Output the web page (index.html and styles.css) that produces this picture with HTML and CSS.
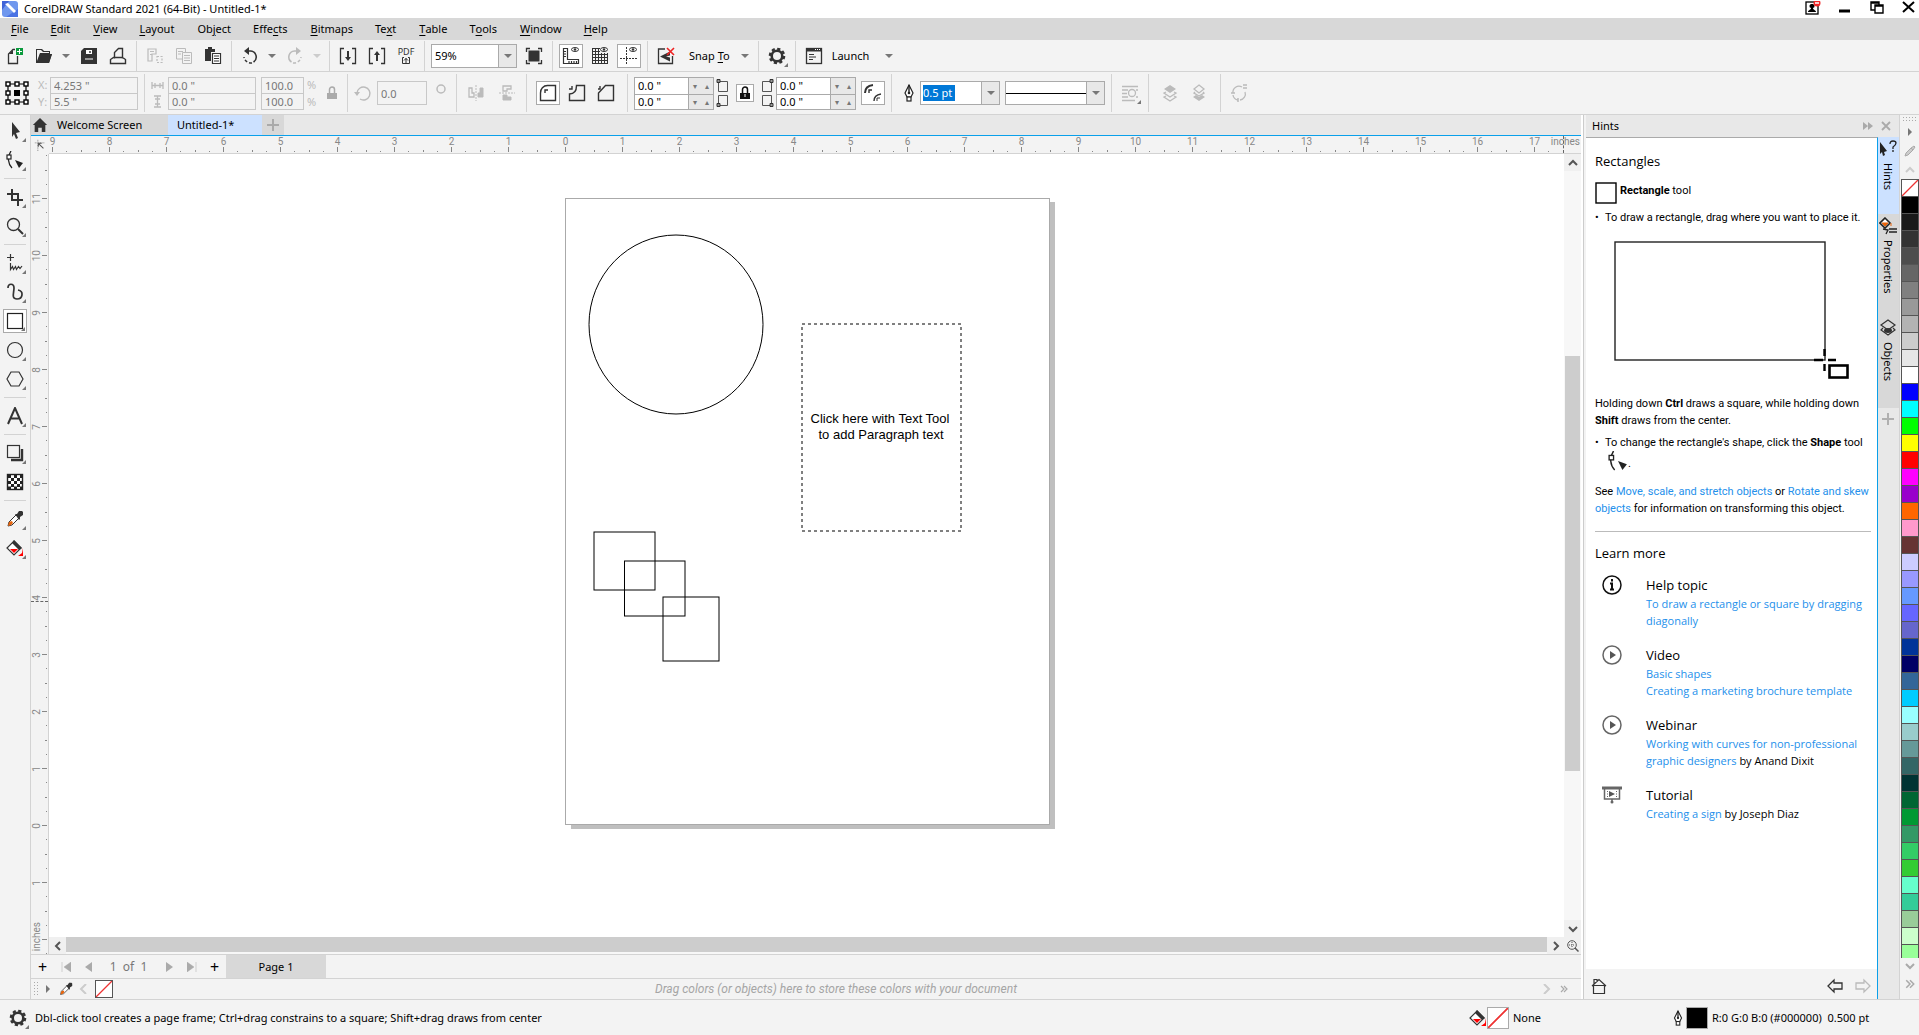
FILE: index.html
```html
<!DOCTYPE html>
<html lang="en">

<head>
    <meta charset="UTF-8">
    <meta name="viewport" content="width=device-width, initial-scale=1.0">
    <title>CorelDRAW Standard 2021 (64-Bit) - Untitled-1*</title>
    <link rel="stylesheet" href="styles.css">
</head>

<body>
    <!-- shared icons -->
    <svg class="sprite" aria-hidden="true">
        <symbol id="dropper" viewBox="0 0 18 18">
            <path d="M2 16l1-4 7-7 3 3-7 7z" fill="#fff" stroke="#333" />
            <path d="M2 16l1-4 3-1 1 2-2 2z" fill="#e8640c" />
            <path d="M9 4l2 0 2-3h3l1 1v3l-3 2v2l-1 1z" fill="#333" />
        </symbol>
        <symbol id="bucket" viewBox="0 0 18 18">
            <path d="M8 2l7 7-7 7-7-7z" fill="#fff" stroke="#333" stroke-width="1.2" />
            <path d="M8 1l8 8-3 2-7-7z" fill="#333" />
            <path d="M4 10h8l-4 4z" fill="#f00" />
            <path d="M17 9v8h-5l4-3z" fill="#f00" />
        </symbol>
        <symbol id="pen" viewBox="0 0 18 18">
            <path d="M9 1l4 8-2 4H7L5 9z" fill="#fff" stroke="#222" stroke-width="1.2" />
            <path d="M9 1v8" stroke="#222" stroke-width="1.4" />
            <circle cx="9" cy="9" r="1.3" fill="#222" />
            <rect x="7" y="13" width="4" height="4" fill="#fff" stroke="#222" stroke-width="1.2" />
        </symbol>
        <symbol id="gear" viewBox="0 0 18 18">
            <circle cx="9" cy="9" r="7.2" fill="none" stroke="#333" stroke-width="2.2" stroke-dasharray="3.2 2.45" />
            <circle cx="9" cy="9" r="5.3" fill="none" stroke="#333" stroke-width="2.6" />
        </symbol>
        <symbol id="undo" viewBox="0 0 18 18">
            <path d="M6 4h3.500a6 6 0 0 1 3 11" fill="none" stroke="currentColor" stroke-width="1.6" />
            <path d="M11 16a7 7 0 0 1-8-6" fill="none" stroke="currentColor" stroke-width="1.5" stroke-dasharray="3 2" />
            <path d="M3 4l5-4v8z" fill="currentColor" />
        </symbol>
        <symbol id="eye" viewBox="0 0 8 5">
            <ellipse cx="4" cy="2.500" rx="3.500" ry="2" fill="#fff" stroke="#333" />
            <circle cx="4" cy="2.500" r="1.200" fill="#333" />
        </symbol>
        <symbol id="shape" viewBox="0 0 18 18">
            <path d="M5 0C1 6 2 13 6 17" fill="none" stroke="#222" stroke-width="1.3" />
            <rect x="1" y="4" width="4" height="4" fill="#fff" stroke="#222" stroke-width="1.2" />
            <path d="M9 9l8 3-4 5z" fill="#222" />
        </symbol>
        <symbol id="play" viewBox="0 0 20 20">
            <circle cx="10" cy="10" r="9" fill="none" stroke="#666" stroke-width="1.5" />
            <path d="M8 6v8l6-4z" fill="#555" />
        </symbol>
        <symbol id="chevrons" viewBox="0 0 8 8">
            <path d="M1 1l3 3-3 3M4 1l3 3-3 3" fill="none" stroke="currentColor" stroke-width="1.2" />
        </symbol>
    </svg>

    <header class="title-bar">
        <svg class="logo" viewBox="0 0 16 16">
            <rect width="16" height="16" rx="3" fill="#6f97ee" />
            <path d="M0 0h7L0 9z" fill="#3f63d8" />
            <path d="M16 16H4l12-8z" fill="#4a73e4" />
            <path d="M3 3l9 9 2-2-8-8z" fill="#fff" />
        </svg>
        <h1>CorelDRAW Standard 2021 (64-Bit) - Untitled-1*</h1>
        <div class="window-buttons">
            <button aria-label="Account"><svg viewBox="0 0 16 16">
                    <rect x="1" y="1" width="12" height="12" fill="none" stroke="#000" stroke-width="1.300" />
                    <path d="M7 3a2 2 0 0 1 1 4c0 2 3 2 3 4H3c0-2 3-2 3-4a2 2 0 0 1 1-4z" />
                    <circle cx="12" cy="2" r="3.500" fill="#f02828" />
                    <path d="M10 2h4" stroke="#fff" stroke-width="1.500" />
                </svg></button>
            <button aria-label="Minimize"><svg viewBox="0 0 16 16">
                    <path d="M2 10h11" stroke="#000" stroke-width="3" />
                </svg></button>
            <button aria-label="Restore"><svg viewBox="0 0 16 16">
                    <path d="M6 9H2V1h8v3M2 2h8M6 4h8v8H6zM6 5h8" fill="none" stroke="#000" stroke-width="1.400" />
                </svg></button>
            <button aria-label="Close"><svg viewBox="0 0 16 16">
                    <path d="M2 1l11 10M13 1L2 11" stroke="#000" stroke-width="2" />
                </svg></button>
        </div>
    </header>

    <nav class="menu-bar">
        <button><u>F</u>ile</button>
        <button><u>E</u>dit</button>
        <button><u>V</u>iew</button>
        <button><u>L</u>ayout</button>
        <button>Ob<u>j</u>ect</button>
        <button>Effe<u>c</u>ts</button>
        <button><u>B</u>itmaps</button>
        <button>Te<u>x</u>t</button>
        <button><u>T</u>able</button>
        <button>T<u>o</u>ols</button>
        <button><u>W</u>indow</button>
        <button><u>H</u>elp</button>
    </nav>

    <div class="toolbar standard">
        <button class="tool" aria-label="New"><svg viewBox="0 0 18 18">
                <path d="M9 2.500H7L2.500 7v9.500h9V9" fill="none" stroke="#333" stroke-width="1.300" />
                <path d="M7 3v4H3z" fill="#333" />
                <rect x="10" y="1" width="7" height="7" fill="#0a9a3c" />
                <path d="M13.500 2v5M11 4.500h5" stroke="#fff" />
            </svg></button>
        <button class="tool" aria-label="Open"><svg viewBox="0 0 18 18">
                <path d="M1 16V2h6l2 2h6v3h2l-3 9z" fill="#333" />
                <path d="M2 14l3-8h9V5H8L6 3H2z" fill="#f3f3f3" />
                <path d="M5 7h12l-3 9H2z" fill="#333" />
            </svg></button>
        <button class="drop" aria-label="Open recent"></button>
        <button class="tool" aria-label="Save"><svg viewBox="0 0 18 18">
                <path d="M4 1h13v16H1V4z" fill="#333" />
                <rect x="6" y="3" width="6" height="4" fill="#fff" />
                <path d="M5 12h8" stroke="#fff" />
                <path d="M10 4v2" stroke="#333" stroke-width="1.500" />
            </svg></button>
        <button class="tool" aria-label="Print"><svg viewBox="0 0 18 18">
                <path d="M5.500 11.500v-6l4-4h4v10M1.500 16.500v-4l3-2h9l3 2v4z" fill="none" stroke="#333" stroke-width="1.400" />
            </svg></button>
        <span class="sep"></span>
        <button class="tool off" aria-label="Cut" disabled><svg viewBox="0 0 18 18">
                <path d="M2 2h8v5H6v7H2zM4 4.500h4M4 7.500h2" fill="none" stroke="currentColor" stroke-width="1.200" />
                <path d="M11 9.500h5v6h-5z" fill="none" stroke="currentColor" stroke-width="1.200" stroke-dasharray="2 1.500" />
            </svg></button>
        <button class="tool off" aria-label="Copy" disabled><svg viewBox="0 0 18 18">
                <path d="M7 12H1.500V1.500h9V5M3 4.500h5M3 7h3" fill="none" stroke="currentColor" />
                <path d="M7.500 5.500h9v11h-9zM9 8.500h6M9 11h6M9 13.500h6" fill="none" stroke="currentColor" />
            </svg></button>
        <button class="tool" aria-label="Paste"><svg viewBox="0 0 18 18">
                <path d="M1 2h3V0h4v2h3v3H7v9H1z" fill="#333" />
                <path d="M8.500 6.500h8v10h-8zM10 9h5M10 11.500h5M10 14h5" fill="#fff" stroke="#333" stroke-width="1.200" />
            </svg></button>
        <span class="sep"></span>
        <button class="tool" aria-label="Undo"><svg>
                <use href="#undo" />
            </svg></button>
        <button class="drop" aria-label="Undo list"></button>
        <button class="tool off flip" aria-label="Redo" disabled><svg>
                <use href="#undo" />
            </svg></button>
        <button class="drop off" aria-label="Redo list" disabled></button>
        <span class="sep"></span>
        <button class="tool" aria-label="Import"><svg viewBox="0 0 18 18">
                <path d="M5 1.500H1.500v15H5M13 1.500h3.500v15H13" fill="none" stroke="#333" stroke-width="1.300" />
                <path d="M8 4h2v6h2l-3 4-3-4h2z" fill="#333" />
            </svg></button>
        <button class="tool" aria-label="Export"><svg viewBox="0 0 18 18">
                <path d="M5 1.500H1.500v15H5M13 1.500h3.500v15H13" fill="none" stroke="#333" stroke-width="1.300" />
                <path d="M8 14h2V8h2L9 4 6 8h2z" fill="#333" />
            </svg></button>
        <button class="tool pdf" aria-label="Publish to PDF"><span>PDF</span><svg viewBox="0 0 8 7">
                <path d="M2 .5H.5v6h7v-6H6" fill="none" stroke="#333" />
                <path d="M4 6V1M2 3.500l2-2 2 2" fill="none" stroke="#333" />
            </svg></button>
        <span class="sep"></span>
        <div class="combo zoom-level">
            <input type="text" value="59%" aria-label="Zoom level">
            <button class="drop" aria-label="Zoom list"></button>
        </div>
        <button class="tool" aria-label="Full-screen preview"><svg viewBox="0 0 18 18">
                <path d="M1.500 5V1.500H5M13 1.500h3.500V5M16.500 13v3.500H13M5 16.500H1.500V13" fill="none" stroke="#333" stroke-width="1.300" />
                <rect x="3.500" y="3.500" width="11" height="11" fill="#333" />
            </svg></button>
        <span class="sep"></span>
        <button class="tool on" aria-label="Show rulers"><svg viewBox="0 0 18 18">
                <path d="M1.500 1.500h4v11h11v4h-15zM2 4.500h2M2 7h2M2 9.500h2M7 14v2M9.500 14v2M12 14v2M14.500 14v2" fill="none" stroke="#333" stroke-width="1.200" />
                <use href="#eye" x="9" y="0" width="8" height="5" />
            </svg></button>
        <button class="tool" aria-label="Show grid"><svg viewBox="0 0 18 18">
                <path d="M1.500 1v16M4.500 1v16M7.500 1v16M10.500 6v11M13.500 6v11M16.500 6v11M1 1.500h8M1 4.500h8M1 7.500h16M1 10.500h16M1 13.500h16M1 16.500h16" stroke="#333" />
                <use href="#eye" x="9" y="0" width="8" height="5" />
            </svg></button>
        <button class="tool on" aria-label="Show guidelines"><svg viewBox="0 0 18 18">
                <path d="M6.500 0v18M0 11.500h18" stroke="#333" stroke-dasharray="2 1" />
                <use href="#eye" x="9" y="0" width="8" height="5" />
            </svg></button>
        <span class="sep"></span>
        <button class="tool" aria-label="Snap off"><svg viewBox="0 0 18 18">
                <path d="M8 2H1.500v14.500h14V9" fill="none" stroke="#333" stroke-width="1.300" />
                <path d="M3 9.500l10-5v4l-4 1 4 1v4z" fill="#333" />
                <path d="M10 1l7 7M17 1l-7 7" stroke="#e22" stroke-width="1.600" />
            </svg></button>
        <button class="snap"><span>Snap <u>T</u>o</span></button>
        <button class="drop" aria-label="Snap options"></button>
        <span class="sep"></span>
        <button class="tool more" aria-label="Options"><svg>
                <use href="#gear" />
            </svg></button>
        <span class="sep"></span>
        <button class="tool" aria-label="Application launcher"><svg viewBox="0 0 18 18">
                <rect x="1.500" y="1.500" width="15" height="15" fill="none" stroke="#333" stroke-width="1.300" />
                <path d="M1 3h16" stroke="#333" stroke-width="3" />
                <path d="M10 2.500h1M12 2.500h1M14 2.500h1" stroke="#fff" />
                <path d="M4 7.500h5M4 10h7M4 12.500h4" stroke="#333" />
            </svg></button>
        <button class="launch">Launch</button>
        <button class="drop" aria-label="Launch list"></button>
    </div>

    <div class="toolbar property">
        <button class="tool" aria-label="Object origin"><svg class="big" viewBox="0 0 24 24">
                <path d="M3 3h18v18H3z" fill="none" stroke="#000" stroke-width="1.200" />
                <g fill="#fff" stroke="#000" stroke-width="1.400">
                    <rect x="1" y="1" width="4" height="4" />
                    <rect x="10" y="1" width="4" height="4" />
                    <rect x="19" y="1" width="4" height="4" />
                    <rect x="1" y="10" width="4" height="4" />
                    <rect x="19" y="10" width="4" height="4" />
                    <rect x="1" y="19" width="4" height="4" />
                    <rect x="10" y="19" width="4" height="4" />
                    <rect x="19" y="19" width="4" height="4" />
                </g>
                <rect x="9" y="9" width="6" height="6" />
            </svg></button>
        <div class="fields position">
            <label for="pos-x">X:</label><input id="pos-x" type="text" value="4.253 &quot;" disabled>
            <label for="pos-y">Y:</label><input id="pos-y" type="text" value="5.5 &quot;" disabled>
        </div>
        <span class="sep"></span>
        <div class="fields size">
            <label for="size-w" aria-label="Width"><svg viewBox="0 0 13 13">
                    <path d="M1 3v7M12 3v7M4 4v5M9 4v5M1 6.500h11" stroke="#bbb" stroke-width="1.300" />
                </svg></label><input id="size-w" type="text" value="0.0 &quot;" disabled>
            <label for="size-h" aria-label="Height"><svg viewBox="0 0 13 13">
                    <path d="M3 1h7M3 12h7M4 4h5M4 9h5M6.500 1v11" stroke="#bbb" stroke-width="1.300" />
                </svg></label><input id="size-h" type="text" value="0.0 &quot;" disabled>
        </div>
        <div class="fields scale">
            <input id="scale-x" type="text" value="100.0" disabled><label for="scale-x">%</label>
            <input id="scale-y" type="text" value="100.0" disabled><label for="scale-y">%</label>
        </div>
        <button class="lock" aria-label="Lock ratio" disabled><svg viewBox="0 0 12 14">
                <path d="M3.500 7V3.500a2.500 2.500 0 0 1 5 0V7" fill="none" stroke="#aaa" stroke-width="1.500" />
                <rect x="1" y="7" width="10" height="6" fill="#aaa" />
            </svg></button>
        <span class="sep"></span>
        <div class="fields angle">
            <label for="angle" aria-label="Angle of rotation"><svg viewBox="0 0 18 18">
                    <path d="M3 9a6.500 6.500 0 1 1 3 6" fill="none" stroke="#bbb" stroke-width="1.400" />
                    <path d="M0 8h6l-3 4z" fill="#bbb" />
                </svg></label><input id="angle" type="text" value="0.0" disabled>
        </div>
        <svg class="degree" viewBox="0 0 18 24">
            <circle cx="9" cy="8" r="4" fill="none" stroke="#bbb" stroke-width="1.500" />
        </svg>
        <span class="sep"></span>
        <button class="tool wide off" aria-label="Mirror horizontally" disabled><svg viewBox="0 0 18 18">
                <path d="M2 4v9h5v-4H5V4z" fill="none" stroke="currentColor" stroke-width="1.300" />
                <path d="M9 1v16" stroke="currentColor" stroke-dasharray="2 1" />
                <path d="M16 4v9h-5v-4h2V4z" fill="currentColor" stroke="currentColor" />
            </svg></button>
        <button class="tool wide off" aria-label="Mirror vertically" disabled><svg viewBox="0 0 18 18">
                <path d="M13 2H5v5h4V5h4z" fill="none" stroke="currentColor" stroke-width="1.300" />
                <path d="M1 9h16" stroke="currentColor" stroke-dasharray="2 1" />
                <path d="M13 16H5v-5h4v2h4z" fill="currentColor" stroke="currentColor" />
            </svg></button>
        <span class="sep"></span>
        <div class="group">
            <button class="tool on" aria-label="Round corner"><svg viewBox="0 0 18 18">
                    <path d="M1.500 16.500V9a7 7 0 0 1 7-7.500h8v15z" fill="none" stroke="#333" stroke-width="1.400" />
                    <path d="M6 9V6h3" fill="none" stroke="#333" stroke-width="1.400" />
                </svg></button>
            <button class="tool" aria-label="Scalloped corner"><svg viewBox="0 0 18 18">
                    <path d="M1.500 16.500V10q7 0 7-8.500h8v15z" fill="none" stroke="#333" stroke-width="1.400" />
                    <path d="M1 5h3V2" fill="none" stroke="#333" stroke-width="1.400" />
                </svg></button>
            <button class="tool" aria-label="Chamfered corner"><svg viewBox="0 0 18 18">
                    <path d="M1.500 16.500V9l7-7.500h8v15z" fill="none" stroke="#333" stroke-width="1.400" />
                    <path d="M1 5h2V2" fill="none" stroke="#333" stroke-width="1.400" />
                </svg></button>
        </div>
        <span class="sep"></span>
        <div class="radius">
            <div class="spins">
                <div class="spin"><input type="text" value="0.0 &quot;" aria-label="Top left radius"><button aria-label="Less">&#9662;</button><button aria-label="More">&#9652;</button></div>
                <div class="spin"><input type="text" value="0.0 &quot;" aria-label="Bottom left radius"><button aria-label="Less">&#9662;</button><button aria-label="More">&#9652;</button></div>
            </div>
            <svg class="corner-marks" viewBox="0 0 16 30">
                <path d="M4.500 3.500h9v10h-9zM4.500 17.500h9v10h-9z" fill="none" stroke="#555" />
                <path d="M3 1.500h3v3H3zM3 25.500h3v3H3z" fill="#999" stroke="#333" />
            </svg>
            <button class="lock on" aria-label="Edit corners together"><svg viewBox="0 0 12 14">
                    <path d="M3.500 7V3.500a2.500 2.500 0 0 1 5 0V7" fill="none" stroke="#111" stroke-width="1.500" />
                    <rect x="1" y="7" width="10" height="6" fill="#111" />
                    <path d="M6 8v3" stroke="#fff" />
                </svg></button>
            <svg class="corner-marks" viewBox="0 0 16 30">
                <path d="M2.500 3.500h9v10h-9zM2.500 17.500h9v10h-9z" fill="none" stroke="#555" />
                <path d="M10 1.500h3v3h-3zM10 25.500h3v3h-3z" fill="#999" stroke="#333" />
            </svg>
            <div class="spins">
                <div class="spin"><input type="text" value="0.0 &quot;" aria-label="Top right radius"><button aria-label="Less">&#9662;</button><button aria-label="More">&#9652;</button></div>
                <div class="spin"><input type="text" value="0.0 &quot;" aria-label="Bottom right radius"><button aria-label="Less">&#9662;</button><button aria-label="More">&#9652;</button></div>
            </div>
        </div>
        <button class="tool on" aria-label="Relative corner scaling"><svg viewBox="0 0 18 18">
                <path d="M1 9q0-7 8-8" fill="none" stroke="#333" stroke-width="2" />
                <path d="M5 9V6h3M10 17q0-6 7-7" fill="none" stroke="#333" stroke-width="1.400" />
                <path d="M13 17v-3h3" fill="none" stroke="#333" />
            </svg></button>
        <span class="sep"></span>
        <div class="outline">
            <label for="outline-width" aria-label="Outline width"><svg>
                    <use href="#pen" />
                </svg></label>
            <div class="combo">
                <span class="picked"><input id="outline-width" type="text" value="0.5 pt"></span>
                <button class="drop" aria-label="Width list"></button>
            </div>
        </div>
        <div class="combo line-style">
            <span class="line-sample"></span>
            <button class="drop" aria-label="Line style"></button>
        </div>
        <span class="sep"></span>
        <button class="tool more off" aria-label="Wrap text" disabled><svg viewBox="0 0 18 18">
                <path d="M1 2.500h16M1 6h6M1 9.500h5M1 13h6M1 16.500h13M15 6h2M15 13h2" stroke="currentColor" stroke-width="1.300" />
                <circle cx="11" cy="9" r="3.500" fill="none" stroke="currentColor" stroke-width="1.300" />
            </svg></button>
        <span class="sep"></span>
        <div class="group">
            <button class="tool off" aria-label="To front of page" disabled><svg viewBox="0 0 18 18">
                    <path d="M9 1l6 4-6 4-6-4z" fill="currentColor" />
                    <path d="M5 8l-2 1 6 4 6-4-2-1M5 12l-2 1 6 4 6-4-2-1" fill="none" stroke="currentColor" stroke-width="1.300" />
                </svg></button>
            <button class="tool off" aria-label="To back of page" disabled><svg viewBox="0 0 18 18">
                    <path d="M9 1l5 4-5 4-5-4zM5 8l-1 1 5 3 5-3-1-1" fill="none" stroke="currentColor" stroke-width="1.300" />
                    <path d="M3 13l3-2 3 2 3-2 3 2-6 4z" fill="currentColor" />
                </svg></button>
        </div>
        <span class="sep"></span>
        <button class="tool off" aria-label="Convert to curves" disabled><svg viewBox="0 0 18 18">
                <path d="M12 3a6 6 0 0 0-9 6M3 11a6 6 0 0 0 5 5M10 16a6 6 0 0 0 5-8" fill="none" stroke="currentColor" stroke-width="1.300" />
                <path d="M13 1h4M1 9h4M8 14v4M13 4h4" stroke="currentColor" stroke-width="1.500" />
            </svg></button>
    </div>

    <main class="workspace">
        <aside class="toolbox">
            <button class="tool more" aria-label="Pick"><svg viewBox="0 0 18 18">
                    <path d="M6 0l8 10-4 1 2 5-2 1-2-5-2 3z" fill="#333" />
                </svg></button>
            <button class="tool more" aria-label="Shape"><svg>
                    <use href="#shape" />
                </svg></button>
            <span class="sep"></span>
            <button class="tool more" aria-label="Crop"><svg viewBox="0 0 18 18">
                    <path d="M1 6h11v12M6 1v11h11" fill="none" stroke="#333" stroke-width="2" />
                </svg></button>
            <button class="tool more" aria-label="Zoom"><svg viewBox="0 0 18 18">
                    <circle cx="7.500" cy="7.500" r="6" fill="none" stroke="#333" stroke-width="1.300" />
                    <path d="M12 12l5 5" stroke="#333" stroke-width="2" />
                </svg></button>
            <span class="sep"></span>
            <button class="tool more" aria-label="Freehand"><svg viewBox="0 0 18 18">
                    <path d="M4.500 0v7M1 3.500h7" stroke="#333" stroke-width="1.200" />
                    <path d="M4.500 9v6.500l2-3 1 3 2-3 1 3 2-3 1.500 2 2-2.500" fill="none" stroke="#333" stroke-width="1.200" />
                </svg></button>
            <button class="tool more" aria-label="Artistic media"><svg viewBox="0 0 18 18">
                    <path d="M2 5c0-5 6-5 6 0 0 5-3 11 3 11 6 0 7-8 1-9" fill="none" stroke="#333" stroke-width="1.700" />
                </svg></button>
            <button class="tool more on" aria-label="Rectangle"><svg viewBox="0 0 18 18">
                    <rect x="1.500" y="1.500" width="15" height="15" fill="#fff" stroke="#222" stroke-width="1.200" />
                </svg></button>
            <button class="tool more" aria-label="Ellipse"><svg viewBox="0 0 18 18">
                    <circle cx="9" cy="9" r="7.500" fill="none" stroke="#333" stroke-width="1.200" />
                </svg></button>
            <button class="tool more" aria-label="Polygon"><svg viewBox="0 0 18 18">
                    <path d="M5 2h8l4 7-4 7H5L1 9z" fill="none" stroke="#333" stroke-width="1.200" />
                </svg></button>
            <span class="sep"></span>
            <button class="tool more" aria-label="Text"><svg viewBox="0 0 18 18">
                    <path d="M2 17L9 1l7 16M4.500 11.500h9" fill="none" stroke="#333" stroke-width="2" />
                </svg></button>
            <span class="sep"></span>
            <button class="tool more" aria-label="Drop shadow"><svg viewBox="0 0 18 18">
                    <rect x="1.500" y="1.500" width="12" height="12" fill="#f3f3f3" stroke="#333" stroke-width="1.200" />
                    <path d="M16 5v11H5" fill="none" stroke="#333" stroke-width="2.400" />
                </svg></button>
            <button class="tool" aria-label="Transparency"><svg viewBox="0 0 18 18">
                    <rect x="1.500" y="1.500" width="15" height="15" fill="#fff" stroke="#222" stroke-width="1.400" />
                    <path d="M2 3.500h14M2 9.500h14M2 15h14" stroke="#222" stroke-width="3" stroke-dasharray="3 3" />
                    <path d="M5 6.500h12M5 12.500h12" stroke="#222" stroke-width="3" stroke-dasharray="3 3" />
                </svg></button>
            <span class="sep"></span>
            <button class="tool more" aria-label="Color eyedropper"><svg>
                    <use href="#dropper" />
                </svg></button>
            <button class="tool more" aria-label="Interactive fill"><svg>
                    <use href="#bucket" />
                </svg></button>
        </aside>

        <section class="document">
            <div class="tabs">
                <button class="tab home"><svg viewBox="0 0 18 18">
                        <path d="M9 1l8 8h-2v8h-4v-5H7v5H3V9H1z" fill="#333" />
                    </svg>Welcome Screen</button>
                <button class="tab current">Untitled-1*</button>
                <button class="tab add" aria-label="New tab"><svg viewBox="0 0 12 12">
                        <path d="M6 0v12M0 6h12" stroke="#aaa" stroke-width="2" />
                    </svg></button>
            </div>

            <div class="sheet">
                <div class="ruler-corner"><svg viewBox="0 0 14 14">
                        <path d="M4.500 1v13M1 4.500h12" stroke="#777" stroke-dasharray="1 1" />
                        <path d="M5 5l6 6M5 5h4M5 5v4" stroke="#555" stroke-width="1.200" fill="none" />
                    </svg></div>
                <div class="ruler-h">
                    <span>9</span><span>8</span><span>7</span><span>6</span><span>5</span><span>4</span><span>3</span><span>2</span><span>1</span><span>0</span><span>1</span><span>2</span><span>3</span><span>4</span><span>5</span><span>6</span><span>7</span><span>8</span><span>9</span><span>10</span><span>11</span><span>12</span><span>13</span><span>14</span><span>15</span><span>16</span><span>17</span>
                    <b class="unit">inches</b>
                    <i class="marker"></i>
                </div>
                <div class="ruler-v">
                    <div></div>
                    <div><span>11</span></div>
                    <div><span>10</span></div>
                    <div><span>9</span></div>
                    <div><span>8</span></div>
                    <div><span>7</span></div>
                    <div><span>6</span></div>
                    <div><span>5</span></div>
                    <div><span>4</span></div>
                    <div><span>3</span></div>
                    <div><span>2</span></div>
                    <div><span>1</span></div>
                    <div><span>0</span></div>
                    <div><span>1</span></div>
                    <div></div>
                    <b class="unit">inches</b>
                    <i class="marker"></i>
                </div>
                <div class="canvas">
                    <svg class="drawing">
                        <rect x="522" y="48" width="484" height="627" fill="#bfbfbf" />
                        <rect x="516.500" y="44.500" width="484" height="626" fill="#fff" stroke="#aaa" />
                        <g fill="none" stroke="#000">
                            <ellipse cx="627" cy="170.500" rx="87" ry="89.500" />
                            <rect x="545" y="378" width="61" height="58" />
                            <rect x="575.500" y="407" width="60.500" height="55" />
                            <rect x="614" y="443" width="56" height="64" />
                            <rect x="753" y="170" width="159" height="207" stroke-dasharray="3 3" />
                        </g>
                        <text x="831" y="269">Click here with Text Tool</text>
                        <text x="832" y="285">to add Paragraph text</text>
                    </svg>
                </div>
                <div class="scroll-v">
                    <button aria-label="Scroll up"><svg viewBox="0 0 10 10">
                            <path d="M1 7l4-4 4 4" />
                        </svg></button>
                    <div class="thumb"></div>
                    <button aria-label="Scroll down"><svg viewBox="0 0 10 10">
                            <path d="M1 3l4 4 4-4" />
                        </svg></button>
                </div>
                <div class="scroll-h">
                    <button aria-label="Scroll left"><svg viewBox="0 0 10 10">
                            <path d="M7 1L3 5l4 4" />
                        </svg></button>
                    <div class="thumb"></div>
                    <button aria-label="Scroll right"><svg viewBox="0 0 10 10">
                            <path d="M3 1l4 4-4 4" />
                        </svg></button>
                </div>
                <button class="navigator" aria-label="Navigator"><svg viewBox="0 0 12 12">
                        <circle cx="5" cy="5" r="4.300" fill="none" stroke="#555" />
                        <path d="M5 2v6M2 5h6" stroke="#555" stroke-dasharray="1 1" />
                        <path d="M8 8l3.500 3.500" stroke="#555" stroke-width="1.500" />
                    </svg></button>
            </div>

            <div class="page-bar">
                <button class="plus" aria-label="Add page before">+</button>
                <button disabled aria-label="First page"><svg viewBox="0 0 10 10">
                        <path d="M1 0v10M10 0v10L3 5z" fill="#aaa" stroke="#aaa" stroke-width=".5" />
                    </svg></button>
                <button disabled aria-label="Previous page"><svg viewBox="0 0 10 10">
                        <path d="M8 0v10L1 5z" fill="#aaa" />
                    </svg></button>
                <span class="count">1&nbsp; of &nbsp;1</span>
                <button disabled aria-label="Next page"><svg viewBox="0 0 10 10">
                        <path d="M2 0v10l7-5z" fill="#aaa" />
                    </svg></button>
                <button disabled aria-label="Last page"><svg viewBox="0 0 10 10">
                        <path d="M9 0v10M0 0v10l7-5z" fill="#aaa" stroke="#aaa" stroke-width=".5" />
                    </svg></button>
                <button class="plus" aria-label="Add page after">+</button>
                <button class="page-tab">Page 1</button>
            </div>

            <div class="doc-palette">
                <span class="grip"></span>
                <button aria-label="Palette menu"><svg viewBox="0 0 10 10">
                        <path d="M3 1v8l4-4z" fill="#777" />
                    </svg></button>
                <button aria-label="Eyedropper"><svg class="dropper">
                        <use href="#dropper" />
                    </svg></button>
                <button aria-label="Previous"><svg viewBox="0 0 10 10">
                        <path d="M7 0L2 5l5 5" fill="none" stroke="#ccc" stroke-width="2" />
                    </svg></button>
                <button class="none" aria-label="No color"></button>
                <em>Drag colors (or objects) here to store these colors with your document</em>
                <button aria-label="Next"><svg viewBox="0 0 10 10">
                        <path d="M3 0l5 5-5 5" fill="none" stroke="#ccc" stroke-width="2" />
                    </svg></button>
                <button class="faint" aria-label="Expand palette"><svg>
                        <use href="#chevrons" />
                    </svg></button>
            </div>
        </section>

        <aside class="docker">
            <div class="docker-head">
                <h2>Hints</h2>
                <button aria-label="Collapse"><svg viewBox="0 0 10 10">
                        <path d="M0 1v8l5-4zM5 1v8l5-4z" fill="#aaa" />
                    </svg></button>
                <button aria-label="Close"><svg viewBox="0 0 10 10">
                        <path d="M1 1l8 8M9 1L1 9" stroke="#aaa" stroke-width="1.800" />
                    </svg></button>
            </div>
            <div class="docker-body">
                <div class="hints">
                    <div class="hint-text">
                        <h3>Rectangles</h3>
                        <p class="tool-name"><svg viewBox="0 0 22 22">
                                <rect x="1" y="1" width="20" height="20" fill="#fff" stroke="#000" stroke-width="1.400" />
                            </svg><span><b>Rectangle</b> tool</span></p>
                        <ul>
                            <li>To draw a rectangle, drag where you want to place it.</li>
                        </ul>
                        <svg class="figure" viewBox="0 0 250 145">
                            <rect x="1" y="1" width="210" height="118" fill="none" stroke="#222" stroke-width="1.400" />
                            <path d="M200 119h9M214 119h8M210.500 108v7M210.500 123v7" stroke="#000" stroke-width="2.400" />
                            <rect x="215.500" y="124.500" width="18" height="12" fill="#fff" stroke="#000" stroke-width="2.600" />
                        </svg>
                        <p>Holding down <b>Ctrl</b> draws a square, while holding down <b>Shift</b> draws from the center.</p>
                        <ul>
                            <li>To change the rectangle's shape, click the <b>Shape</b> tool <svg class="shape">
                                    <use href="#shape" />
                                </svg>.</li>
                        </ul>
                        <p>See <a href="#">Move, scale, and stretch objects</a> or <a href="#">Rotate and skew objects</a> for information on transforming this object.</p>
                        <hr>
                        <h3 class="learn">Learn more</h3>
                        <div class="topic">
                            <svg viewBox="0 0 20 20">
                                <circle cx="10" cy="10" r="9" fill="none" stroke="#111" stroke-width="1.500" />
                                <path d="M10 4v2.500M8 8.500h2v6M8 14.500h4" fill="none" stroke="#111" stroke-width="2" />
                            </svg>
                            <div>
                                <h4>Help topic</h4>
                                <p><a href="#">To draw a rectangle or square by dragging diagonally</a></p>
                            </div>
                        </div>
                        <div class="topic">
                            <svg>
                                <use href="#play" />
                            </svg>
                            <div>
                                <h4>Video</h4>
                                <p><a href="#">Basic shapes</a><br><a href="#">Creating a marketing brochure template</a></p>
                            </div>
                        </div>
                        <div class="topic">
                            <svg>
                                <use href="#play" />
                            </svg>
                            <div>
                                <h4>Webinar</h4>
                                <p><a href="#">Working with curves for non-professional graphic designers</a> by Anand Dixit</p>
                            </div>
                        </div>
                        <div class="topic">
                            <svg viewBox="0 0 20 20">
                                <path d="M0 3h20" stroke="#666" stroke-width="3" />
                                <path d="M2.500 4v10h15V4M10 14v4" fill="none" stroke="#666" stroke-width="1.500" />
                                <path d="M7 6v6l6-3z" fill="#555" />
                                <path d="M5 6.500h1M5 9h1M5 11.500h1M14 6.500h1M14 9h1M14 11.500h1" stroke="#666" />
                                <circle cx="10" cy="17" r="1.500" fill="#666" />
                            </svg>
                            <div>
                                <h4>Tutorial</h4>
                                <p><a href="#">Creating a sign</a> by Joseph Diaz</p>
                            </div>
                        </div>
                    </div>
                    <div class="hint-nav">
                        <button aria-label="Hints home"><svg viewBox="0 0 16 16">
                                <path d="M1 8l7-6.500L15 8M2.500 7.500v8h11v-8zM3 6V1.500h3V4" fill="none" stroke="#333" stroke-width="1.200" />
                            </svg></button>
                        <button class="back" aria-label="Back"><svg viewBox="0 0 16 16">
                                <path d="M1 8l6-6v3h8v6H7v3z" fill="none" stroke="#333" stroke-width="1.300" />
                            </svg></button>
                        <button aria-label="Forward" disabled><svg viewBox="0 0 16 16">
                                <path d="M15 8L9 2v3H1v6h8v3z" fill="none" stroke="#bbb" stroke-width="1.300" />
                            </svg></button>
                    </div>
                </div>
                <div class="docker-tabs">
                    <button class="hints-tab"><svg viewBox="0 0 18 18">
                            <path d="M1 2l7 9-3 1 1 3-2 1-1-4-2 2z" fill="#222" />
                            <path d="M11 4q0-3 3-3t3 2-3 4v2M14 10v2" fill="none" stroke="#222" stroke-width="1.300" />
                        </svg><span>Hints</span></button>
                    <button class="properties-tab"><svg viewBox="0 0 18 18">
                            <path d="M6 1l5 5-5 5-5-5z" fill="#fff" stroke="#222" stroke-width="1.600" />
                            <path d="M3 6h6l-3 3zM12 9V6" fill="#e8640c" stroke="#e8640c" />
                            <path d="M4 12l5 1-2 4M10 12h8M10 15h8" fill="none" stroke="#222" stroke-width="1.300" />
                        </svg><span>Properties</span></button>
                    <button class="objects-tab"><svg viewBox="0 0 18 18">
                            <path d="M9 1l7 5-7 5-7-5z" fill="none" stroke="#333" stroke-width="1.200" />
                            <path d="M4 9l-2 2 7 5 7-5-2-2" fill="none" stroke="#333" stroke-width="1.200" />
                            <ellipse cx="9" cy="11.500" rx="4" ry="2.500" fill="#333" />
                        </svg><span>Objects</span></button>
                    <button class="add-tab" aria-label="Add docker"><svg viewBox="0 0 12 12">
                            <path d="M6 0v12M0 6h12" stroke="#b0b0b0" stroke-width="2" />
                        </svg></button>
                </div>
            </div>
        </aside>

        <aside class="palette">
            <span class="grip"></span>
            <button aria-label="Palette menu"><svg viewBox="0 0 10 10">
                    <path d="M3 1v8l4-4z" fill="#777" />
                </svg></button>
            <button aria-label="Palette eyedropper"><svg class="pale" viewBox="0 0 12 12">
                    <path d="M1 11l1-3 5-5 2 2-5 5zM7 3l3-2 1 1-2 3z" fill="#ccc" stroke="#aaa" />
                </svg></button>
            <button aria-label="Scroll palette up"><svg viewBox="0 0 10 10">
                    <path d="M1 7l4-4 4 4" fill="none" stroke="#ccc" stroke-width="2" />
                </svg></button>
            <div class="swatches"></div>
            <button class="scroll-down" aria-label="Scroll palette down"><svg viewBox="0 0 10 10">
                    <path d="M1 3l4 4 4-4" fill="none" stroke="#aaa" stroke-width="2" />
                </svg></button>
            <button class="faint" aria-label="Expand palette"><svg>
                    <use href="#chevrons" />
                </svg></button>
        </aside>
    </main>

    <footer class="status-bar">
        <button class="tool more" aria-label="Status options"><svg>
                <use href="#gear" />
            </svg></button>
        <span class="tip">Dbl-click tool creates a page frame; Ctrl+drag constrains to a square; Shift+drag draws from center</span>
        <div class="fill-info">
            <svg>
                <use href="#bucket" />
            </svg>
            <span class="chip empty"></span>
            <span>None</span>
        </div>
        <div class="outline-info">
            <svg>
                <use href="#pen" />
            </svg>
            <span class="chip"></span>
            <span>R:0 G:0 B:0 (#000000)&nbsp; 0.500 pt</span>
        </div>
    </footer>
    <script src="palette.js"></script>
</body>

</html>
```
FILE: styles.css
```css
* {
    margin: 0;
    padding: 0;
    box-sizing: border-box;
}

body {
    display: flex;
    flex-direction: column;
    height: 100vh;
    overflow: hidden;
    font-family: "Noto Sans", "Open Sans", sans-serif;
    font-size: 11px;
    line-height: 16px;
    color: #000;
    background-color: #f3f3f3;
}

button,
input {
    font: inherit;
    color: inherit;
    border: none;
    background: none;
}

button {
    display: flex;
    align-items: center;
    justify-content: center;
    flex-shrink: 0;
}

svg {
    width: 18px;
    height: 18px;
    flex-shrink: 0;
}

a {
    color: #2490eb;
    text-decoration: none;
}

.sprite {
    display: none;
}

/* title and menu */
.title-bar {
    display: flex;
    align-items: center;
    gap: 6px;
    height: 18px;
    padding: 0 2px;
    background-color: #fff;
}

.title-bar h1 {
    font-size: 11px;
    font-weight: normal;
    line-height: 16px;
}

.logo {
    width: 16px;
    height: 16px;
}

.window-buttons {
    display: flex;
    gap: 16px;
    margin-left: auto;
}

.window-buttons svg {
    width: 16px;
    height: 16px;
}

.menu-bar {
    display: flex;
    height: 22px;
    background-color: #d8d8d8;
}

.menu-bar button {
    padding: 0 11px;
}

.menu-bar button:nth-child(even) {
    padding-right: 12px;
}

u {
    text-underline-offset: 2px;
}

/* toolbars */
.toolbar {
    display: flex;
    align-items: center;
    gap: 5px;
    border-bottom: 1px solid #d3d3d3;
}

.standard {
    height: 32px;
    padding-left: 3px;
}

.property {
    height: 43px;
    padding-left: 5px;
}

.tool {
    position: relative;
    width: 24px;
    height: 24px;
    color: #333;
}

.tool.wide {
    width: 26px;
}

.tool.on {
    background-color: #fff;
    border: 1px solid #aaa;
}

.tool.off {
    color: #bbb;
}

.flip svg {
    transform: scaleX(-1);
}

.more::after {
    content: "";
    position: absolute;
    right: 1px;
    bottom: 1px;
    border: 2px solid #777;
    border-top-color: transparent;
    border-left-color: transparent;
}

.big {
    width: 24px;
    height: 24px;
}

.drop {
    width: 13px;
    height: 22px;
    margin-left: -2px;
}

.drop::before {
    content: "";
    border: 4px solid transparent;
    border-top-color: #777;
    border-bottom: none;
}

.drop.off::before {
    border-top-color: #ccc;
}

.sep {
    width: 1px;
    height: 30px;
    margin: 0 1px;
    background-color: #d3d3d3;
}

.property .sep {
    height: 38px;
}

.pdf {
    flex-direction: column;
    font-size: 9px;
    line-height: 10px;
}

.pdf svg {
    width: 8px;
    height: 7px;
}

.snap {
    padding: 0 6px;
}

.launch {
    padding: 0 10px 0 1px;
}

.combo {
    display: flex;
    align-items: center;
    width: 80px;
    height: 24px;
    border: 1px solid #aaa;
    background-color: #fff;
}

.combo input {
    flex: 1;
    min-width: 0;
    padding-left: 3px;
}

.combo .drop {
    width: 18px;
    height: 22px;
    margin: 0 0 0 auto;
    border-left: 1px solid #aaa;
    background-color: #e8e8e8;
}

.zoom-level {
    width: 86px;
}

.picked {
    display: flex;
    margin-left: 2px;
    background-color: #0078d7;
    color: #fff;
}

.picked input {
    width: 32px;
    padding: 0;
}

.line-style {
    width: 100px;
}

.line-sample {
    flex: 1;
    height: 1px;
    background-color: #000;
}

.fields {
    display: grid;
    align-items: center;
    color: #bbb;
}

.fields input {
    height: 17px;
    padding-left: 3px;
    border: 1px solid #c8c8c8;
    color: #777;
    min-width: 0;
}

.fields input:nth-of-type(2) {
    margin-top: -1px;
}

.fields label {
    display: flex;
}

.fields label svg {
    width: 13px;
    height: 13px;
}

.position {
    grid-template-columns: 12px 88px;
    margin-left: 4px;
}

.size {
    grid-template-columns: 17px 88px;
}

.scale {
    grid-template-columns: 43px 14px;
}

.scale label {
    padding-left: 3px;
}

.angle {
    grid-template-columns: 23px 50px;
}

.angle input {
    height: 24px;
}

.angle label svg {
    width: 18px;
    height: 18px;
}

.degree {
    height: 24px;
}

.lock {
    width: 18px;
    height: 18px;
}

.lock.on {
    background-color: #fff;
    border: 1px solid #aaa;
}

.lock svg {
    width: 12px;
    height: 14px;
}

.group {
    display: flex;
    gap: 5px;
    margin: 0 3px;
}

.radius {
    display: flex;
    align-items: center;
}

.radius .lock {
    margin: 0 6px;
}

.corner-marks {
    width: 16px;
    height: 30px;
}

.spins {
    width: 80px;
    border: 1px solid #aaa;
}

.spin {
    display: flex;
    height: 16px;
    background-color: #e8e8e8;
}

.spin + .spin {
    height: 15px;
    border-top: 1px solid #aaa;
}

.spin input {
    width: 54px;
    padding-left: 3px;
    background-color: #fff;
    border-right: 1px solid #aaa;
}

.spin button {
    width: 12px;
    font-size: 8px;
    color: #777;
}

.outline {
    display: flex;
    align-items: center;
}

.outline label {
    display: flex;
    width: 22px;
    padding-left: 2px;
}

/* workspace */
.workspace {
    display: flex;
    flex: 1;
    min-height: 0;
}

.toolbox {
    display: flex;
    flex-direction: column;
    align-items: center;
    gap: 5px;
    width: 31px;
    padding-top: 4px;
    border-right: 1px solid #d3d3d3;
}

.toolbox .sep {
    width: 22px;
    height: 1px;
    margin: 1px 0;
}

.document {
    display: flex;
    flex-direction: column;
    flex: 1;
    min-width: 0;
}

.tabs {
    display: flex;
    height: 21px;
    background-color: #e8e8e8;
    border-bottom: 1px solid #0aa0ea;
}

.tab {
    height: 20px;
    padding: 0 27px 0 9px;
    background-color: #d8d8d8;
}

.home {
    width: 137px;
    gap: 9px;
    padding: 0 0 0 1px;
    justify-content: flex-start;
}

.home svg {
    width: 16px;
}

.current {
    width: 94px;
    justify-content: flex-start;
    background-color: #cce1ff;
}

.add {
    width: 22px;
    padding: 0;
}

.add svg {
    width: 12px;
    height: 12px;
}

.sheet {
    display: grid;
    grid-template-columns: 18px 1fr 17px;
    grid-template-rows: 18px 1fr 17px;
    flex: 1;
    min-height: 0;
}

.ruler-corner {
    display: flex;
    align-items: center;
    justify-content: center;
}

.ruler-corner svg {
    width: 12px;
    height: 12px;
}

.ruler-h,
.ruler-v {
    position: relative;
    overflow: hidden;
    font-family: Roboto, "Open Sans", sans-serif;
    font-size: 10px;
    line-height: 12px;
    color: #888;
}

.ruler-h {
    grid-column: 2 / 4;
    display: flex;
    border-bottom: 1px solid #d3d3d3;
}

.ruler-h span {
    flex: none;
    width: 57px;
    height: 17px;
    text-align: center;
    background-image: linear-gradient(#888, #888), linear-gradient(#888, #888), linear-gradient(#888, #888), linear-gradient(#888, #888);
    background-size: 1px 5px, 1px 1px, 1px 1px, 1px 2px;
    background-position: 28px 11px, 14px 15px, 42px 15px, 0 14px;
    background-repeat: no-repeat;
}

.ruler-h span:first-child {
    margin-left: -25px;
}

.unit {
    position: absolute;
    font-weight: normal;
}

.ruler-h .unit {
    right: 1px;
}

.marker {
    position: absolute;
}

.ruler-h .marker {
    right: 17px;
    height: 17px;
    border-left: 1px dashed #666;
}

.ruler-v {
    grid-row: 2 / 4;
    border-right: 1px solid #d3d3d3;
}

.ruler-v div {
    display: flex;
    align-items: center;
    height: 57px;
    background-image: linear-gradient(#888, #888), linear-gradient(#888, #888), linear-gradient(#888, #888), linear-gradient(#888, #888);
    background-size: 5px 1px, 1px 1px, 1px 1px, 2px 1px;
    background-position: 11px 28px, 15px 14px, 15px 42px, 14px 0;
    background-repeat: no-repeat;
}

.ruler-v div:first-child {
    margin-top: -41px;
}

.ruler-v span,
.ruler-v .unit {
    writing-mode: vertical-rl;
    transform: rotate(180deg);
}

.ruler-v .unit {
    left: 0;
    bottom: 3px;
}

.ruler-v .marker {
    top: 447px;
    width: 17px;
    border-top: 1px dashed #666;
}

.canvas {
    background-color: #fff;
    overflow: hidden;
}

.drawing {
    display: block;
    width: 100%;
    height: 100%;
    font-family: "Liberation Sans", Arial, sans-serif;
    font-size: 13px;
    text-anchor: middle;
}

.scroll-v,
.scroll-h {
    display: flex;
    background-color: #f7f7f7;
}

.scroll-v {
    flex-direction: column;
}

.scroll-v button,
.scroll-h button,
.navigator {
    width: 17px;
    height: 17px;
    background-color: #f0f0f0;
}

.scroll-v svg,
.scroll-h svg {
    width: 10px;
    height: 10px;
    fill: none;
    stroke: #555;
    stroke-width: 2;
}

.thumb {
    background-color: #cdcdcd;
}

.scroll-v .thumb {
    width: 15px;
    height: 53%;
    margin: 185px 1px auto;
}

.scroll-h .thumb {
    flex: 1;
    height: 15px;
}

.navigator svg {
    width: 12px;
    height: 12px;
}

.page-bar {
    display: flex;
    align-items: center;
    height: 25px;
    border-top: 1px solid #d3d3d3;
    border-bottom: 1px solid #d3d3d3;
}

.page-bar button {
    width: 23px;
}

.page-bar svg {
    width: 10px;
    height: 10px;
}

.page-bar .plus {
    font-size: 16px;
}

.count {
    width: 57px;
    text-align: center;
    color: #777;
    font-size: 12px;
}

.page-bar .page-tab {
    width: 100px;
    height: 23px;
    background-color: #d8d8d8;
}

.doc-palette {
    display: flex;
    align-items: center;
    height: 20px;
    color: #a5a5a5;
}

.doc-palette button {
    width: 18px;
    height: 18px;
}

.doc-palette svg {
    width: 10px;
    height: 10px;
}

.doc-palette .dropper {
    width: 14px;
    height: 14px;
}

.doc-palette em {
    flex: 1;
    padding-left: 22px;
    font-family: Roboto, "Open Sans", sans-serif;
    font-size: 12px;
    text-align: center;
}

.doc-palette button:last-child {
    margin: 0 8px 0 0;
}

.grip {
    width: 6px;
    height: 16px;
    background-image: radial-gradient(#aaa 1px, transparent 1px);
    background-size: 3px 3px;
}

.doc-palette .grip {
    margin: 0 0 0 2px;
}

.doc-palette .none {
    margin-left: 2px;
    border: 1px solid #555;
}

.none,
.palette .none,
.chip.empty {
    background: linear-gradient(to bottom right, #fff 46%, #e33 48%, #e33 52%, #fff 54%);
}

.faint {
    color: #aaa;
}

.faint svg {
    width: 8px;
    height: 8px;
}

/* docker */
.docker {
    display: flex;
    flex-direction: column;
    width: 318px;
    border-left: 2px solid #fff;
    box-shadow: inset 1px 0 #ccc;
    padding-left: 3px;
}

.docker-head {
    display: flex;
    align-items: center;
    gap: 8px;
    height: 22px;
    padding: 0 8px 0 6px;
    background-color: #e8e8e8;
}

.docker-head h2 {
    flex: 1;
    font-size: 11px;
    font-weight: normal;
}

.docker-head svg {
    width: 10px;
    height: 10px;
}

.docker-body {
    display: flex;
    flex: 1;
    min-height: 0;
}

.hints {
    display: flex;
    flex-direction: column;
    flex: 1;
    border-top: 1px solid #aaa;
    border-right: 1px solid #0aa0ea;
}

.hint-text {
    flex: 1;
    padding: 14px 6px 0 9px;
    background-color: #fff;
    font-family: Roboto, "Open Sans", sans-serif;
    line-height: 17px;
}

.hint-text h3,
.topic {
    font-family: "Open Sans", "Noto Sans", sans-serif;
}

.hint-text h3,
.hint-text h4 {
    font-size: 13px;
    font-weight: normal;
    line-height: 18px;
}

.tool-name {
    display: flex;
    gap: 3px;
    margin-top: 12px;
}

.tool-name svg {
    width: 22px;
    height: 22px;
}

.hint-text ul {
    padding-left: 10px;
    margin-top: 5px;
    list-style: none;
}

.hint-text li::before {
    content: "•";
    float: left;
    margin-left: -10px;
}

.figure {
    display: block;
    width: 250px;
    height: 145px;
    margin: 15px 0 9px 19px;
}

.shape {
    display: inline-block;
    width: 20px;
    height: 20px;
    margin-left: 3px;
    vertical-align: -4px;
}

.hint-text ul + p {
    margin-top: 11px;
}

.hint-text hr {
    margin: 14px 0 12px;
    border: none;
    border-top: 1px solid #bbb;
}

.topic {
    display: flex;
    gap: 24px;
    height: 70px;
    padding-left: 7px;
}

.learn + .topic {
    margin-top: 13px;
}

.topic svg {
    width: 20px;
    height: 20px;
}

.hint-text h4 {
    line-height: 20px;
}

.hint-nav {
    display: flex;
    align-items: center;
    gap: 12px;
    height: 30px;
    padding: 4px 6px 0 5px;
}

.hint-nav svg {
    width: 16px;
    height: 16px;
}

.hint-nav .back {
    margin-left: auto;
}

.docker-tabs {
    display: flex;
    flex-direction: column;
    width: 21px;
    background-color: #e8e8e8;
}

.docker-tabs button {
    flex-direction: column;
    justify-content: flex-start;
    gap: 5px;
    padding: 3px 2px 0 0;
    background-color: #d8d8d8;
}

.docker-tabs span {
    writing-mode: vertical-rl;
}

.docker-tabs .hints-tab {
    height: 77px;
    background-color: #cce1ff;
}

.properties-tab {
    height: 102px;
}

.objects-tab {
    height: 92px;
}

.docker-tabs .add-tab {
    padding-top: 5px;
    background: none;
}

.docker-tabs .add-tab svg {
    width: 12px;
    height: 12px;
}

/* color palette */
.palette {
    display: flex;
    flex-direction: column;
    align-items: center;
    width: 20px;
    padding: 1px 0 6px;
    border-left: 1px solid #d3d3d3;
}

.palette .grip {
    width: 16px;
    height: 6px;
}

.palette button {
    width: 18px;
    height: 19px;
}

.palette .scroll-down {
    height: 16px;
}

.palette svg {
    width: 10px;
    height: 10px;
}

.palette .pale {
    width: 12px;
    height: 12px;
}

.swatches {
    flex: 1;
    width: 18px;
    min-height: 0;
    overflow: hidden;
    border: 1px solid #555;
    border-bottom: none;
}

.palette .swatches button {
    width: 16px;
    height: 17px;
    border: none;
    border-bottom: 1px solid #555;
}

/* status bar */
.status-bar {
    display: flex;
    align-items: center;
    height: 36px;
    padding-left: 6px;
    border-top: 1px solid #d3d3d3;
}

.tip {
    flex: 1;
    padding-left: 5px;
}

.fill-info,
.outline-info {
    display: flex;
    align-items: center;
}

.fill-info {
    width: 201px;
}

.outline-info {
    width: 249px;
}

.outline-info svg {
    width: 16px;
}

.chip {
    width: 22px;
    height: 22px;
    margin-right: 4px;
    border: 1px solid #aaa;
    background-color: #000;
}
```
FILE: palette.js
```javascript
const colors = [
    "none", "#000000", "#1a1a1a", "#333333", "#4d4d4d", "#666666", "#808080", "#999999",
    "#b3b3b3", "#cccccc", "#e6e6e6", "#ffffff", "#0000ff", "#00ffff", "#00ff00", "#ffff00",
    "#ff0000", "#ff00ff", "#9900cc", "#ff6600", "#ff99cc", "#663333", "#ccccff", "#9999ff",
    "#6699ff", "#6666ff", "#6666cc", "#003399", "#000066", "#336699", "#00ccff", "#99ffff",
    "#99cccc", "#669999", "#336666", "#003333", "#006633", "#009933", "#339966", "#33cc66",
    "#33cc33", "#66ffcc", "#33cc99", "#99cc99", "#ccffcc", "#99ff99"
];

const swatches = document.querySelector(".swatches");

colors.forEach((color) => {
    const button = document.createElement("button");
    button.setAttribute("aria-label", color);
    if (color === "none") {
        button.className = "none";
    } else {
        button.style.backgroundColor = color;
    }
    swatches.appendChild(button);
});
```
